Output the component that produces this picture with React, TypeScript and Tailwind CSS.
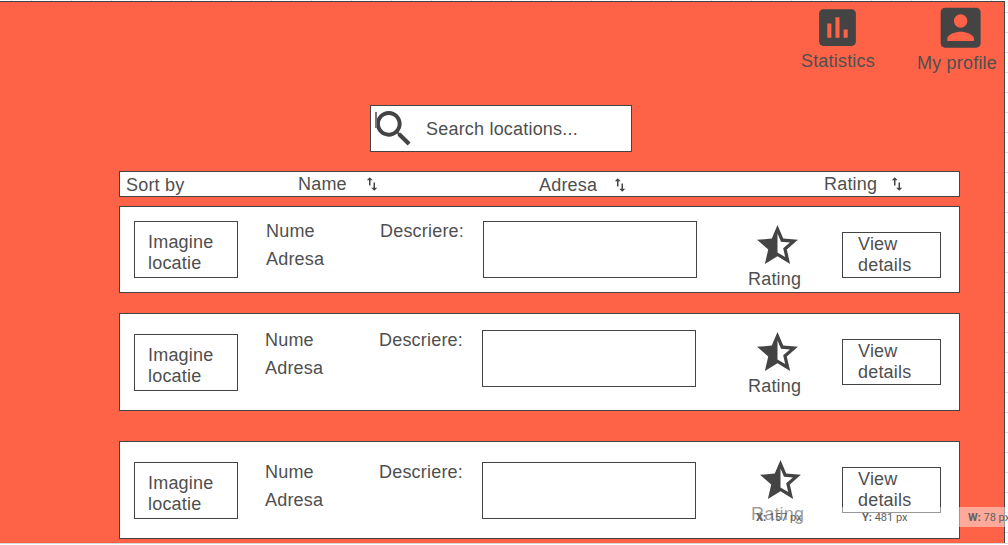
import React from "react";

const ICONS = {
  stats:
    "M19 3H5c-1.1 0-2 .9-2 2v14c0 1.1.9 2 2 2h14c1.1 0 2-.9 2-2V5c0-1.1-.9-2-2-2zM9 17H7v-7h2v7zm4 0h-2V7h2v10zm4 0h-2v-4h2v4z",
  profile:
    "M3 5v14c0 1.1.89 2 2 2h14c1.1 0 2-.9 2-2V5c0-1.1-.9-2-2-2H5c-1.11 0-2 .9-2 2zm12 4c0 1.66-1.34 3-3 3s-3-1.34-3-3 1.34-3 3-3 3 1.34 3 3zm-9 8c0-2 4-3.1 6-3.1s6 1.1 6 3.1v1H6v-1z",
  search:
    "M15.5 14h-.79l-.28-.27C15.41 12.59 16 11.11 16 9.5 16 5.91 13.09 3 9.5 3S3 5.91 3 9.5 5.91 16 9.5 16c1.61 0 3.09-.59 4.23-1.57l.27.28v.79l5 4.99L20.49 19l-4.99-5zm-6 0C7.01 14 5 11.99 5 9.5S7.01 5 9.5 5 14 7.01 14 9.5 11.99 14 9.5 14z",
  sort: "M16 17.01V10h-2v7.01h-3L15 21l4-3.99h-3zM9 3L5 6.99h3V14h2V6.99h3L9 3z",
  star: "M22 9.24l-7.19-.62L12 2 9.19 8.63 2 9.24l5.46 4.73L5.82 21 12 17.27 18.18 21l-1.63-7.03L22 9.24zM12 15.4V6.1l1.71 4.04 4.38.38-3.32 2.88 1 4.28L12 15.4z",
};

function Icon({ d, className }: { d: string; className: string }) {
  return (
    <svg viewBox="0 0 24 24" className={`block shrink-0 fill-[#444444] ${className}`}>
      <path d={d} />
    </svg>
  );
}

type Place = {
  card: string;
  image: string;
  info: string;
  label: string;
  box: string;
  rating: string;
  view: string;
};

const places: Place[] = [
  {
    card: "mt-[9px] h-[87px]",
    image: "mt-[14px]",
    info: "mt-[14px] ml-[28px]",
    label: "mt-[14px]",
    box: "mt-[14px]",
    rating: "mt-[14px] ml-[51px]",
    view: "mt-[25px]",
  },
  {
    card: "mt-[20px] h-[98px]",
    image: "mt-[20px]",
    info: "mt-[16px] ml-[27px]",
    label: "mt-[16px]",
    box: "mt-[16px]",
    rating: "mt-[14px] ml-[52px]",
    view: "mt-[25px]",
  },
  {
    card: "mt-[30px] h-[98px]",
    image: "mt-[20px]",
    info: "mt-[20px] ml-[27px]",
    label: "mt-[20px]",
    box: "mt-[20px]",
    rating: "mt-[14px] ml-[55px] -mr-[3px]",
    view: "mt-[25px]",
  },
];

function PlaceCard({ p }: { p: Place }) {
  return (
    <div className={`flex items-start border border-[#444444] bg-white pl-[14px] ${p.card}`}>
      <div className={`h-[57px] w-[104px] shrink-0 border border-[#444444] pt-[10px] pl-[13px] ${p.image}`}>
        Imagine
        <br />
        locatie
      </div>
      <div className={`flex w-[114px] shrink-0 flex-col gap-[7px] ${p.info}`}>
        <span>Nume</span>
        <span>Adresa</span>
      </div>
      <div className={`w-[103px] shrink-0 ${p.label}`}>Descriere:</div>
      <div className={`h-[57px] w-[214px] shrink-0 border border-[#444444] ${p.box}`} />
      <div className={`w-[94px] shrink-0 ${p.rating}`}>
        <Icon d={ICONS.star} className="-mb-px ml-[5px] h-[49px] w-[49px]" />
        <div>Rating</div>
      </div>
      <div className={`h-[46px] w-[99px] shrink-0 border border-[#444444] pt-[1px] pl-[15px] ${p.view}`}>
        View
        <br />
        details
      </div>
    </div>
  );
}

export default function App() {
  return (
    <div className="relative flex h-[545px] w-[1008px] flex-col overflow-hidden bg-white font-['Liberation_Sans',Arial,sans-serif] text-[18px] leading-[21px] tracking-[0.2px] text-[#4f4f4f]">
      <div className="h-px shrink-0 bg-[repeating-linear-gradient(to_right,#ffffff_0px,#ffffff_11px,#dddddd_11px,#dddddd_12px,#ffffff_12px,#ffffff_20px)]" />
      <div className="flex h-[542px] shrink-0">
        <main className="h-full w-[1005px] shrink-0 overflow-hidden border-t border-r border-[#444444] bg-[#ff6347]">
          <nav className="flex h-[103px] justify-end pr-[7px]">
            <div className="mr-[42px] flex flex-col items-center">
              <Icon d={ICONS.stats} className="mt-[1px] h-[49px] w-[49px]" />
              <span className="-mt-[1px]">Statistics</span>
            </div>
            <div className="flex flex-col items-center">
              <Icon d={ICONS.profile} className="-mt-[1px] ml-[8px] h-[53.3px] w-[53.3px]" />
              <span className="-mt-[1px]">My profile</span>
            </div>
          </nav>
          <div className="relative ml-[370px] flex h-[47px] w-[262px] items-center border border-[#444444] bg-white">
            <div className="absolute top-[6px] left-[4px] h-[16px] w-[1.5px] bg-[#777777]" />
            <Icon d={ICONS.search} className="-ml-[1.5px] h-[47.5px] w-[47.5px]" />
            <span className="mt-[2px] ml-[9px]">Search locations...</span>
          </div>
          <div className="mt-[19px] ml-[119px] w-[841px]">
            <div className="flex h-[26px] items-start border border-[#444444] bg-white pl-[6px]">
              <span className="mt-[3px] w-[172px]">Sort by</span>
              <span className="mt-[2px] w-[65px]">Name</span>
              <Icon d={ICONS.sort} className="mt-[3px] h-[18px] w-[18px]" />
              <span className="mt-[3px] ml-[158px] w-[72px]">Adresa</span>
              <Icon d={ICONS.sort} className="mt-[4px] h-[18px] w-[18px]" />
              <span className="mt-[2px] ml-[195px] w-[64px]">Rating</span>
              <Icon d={ICONS.sort} className="mt-[3px] h-[18px] w-[18px]" />
            </div>
            {places.map((p, i) => (
              <PlaceCard key={i} p={p} />
            ))}
          </div>
        </main>
        <div className="w-[3px] bg-[repeating-linear-gradient(to_bottom,#ffffff_0px,#ffffff_11px,#dddddd_11px,#dddddd_12px,#ffffff_12px,#ffffff_20px)]" />
      </div>
      <div className="h-px shrink-0 bg-[#d8d8d8]" />
      <div className="absolute top-[507px] left-[740px] flex h-[20px] w-[268px] items-center overflow-hidden bg-white/45 pt-[1px] pl-[16px] font-['Roboto',sans-serif] text-[11px] leading-[19px] tracking-normal whitespace-nowrap text-[#606060]">
        <span className="w-[106px] shrink-0"><b>X:</b> 157 px</span>
        <span className="w-[106px] shrink-0"><b>Y:</b> 481 px</span>
        <span className="shrink-0"><b>W:</b> 78 px</span>
      </div>
    </div>
  );
}
